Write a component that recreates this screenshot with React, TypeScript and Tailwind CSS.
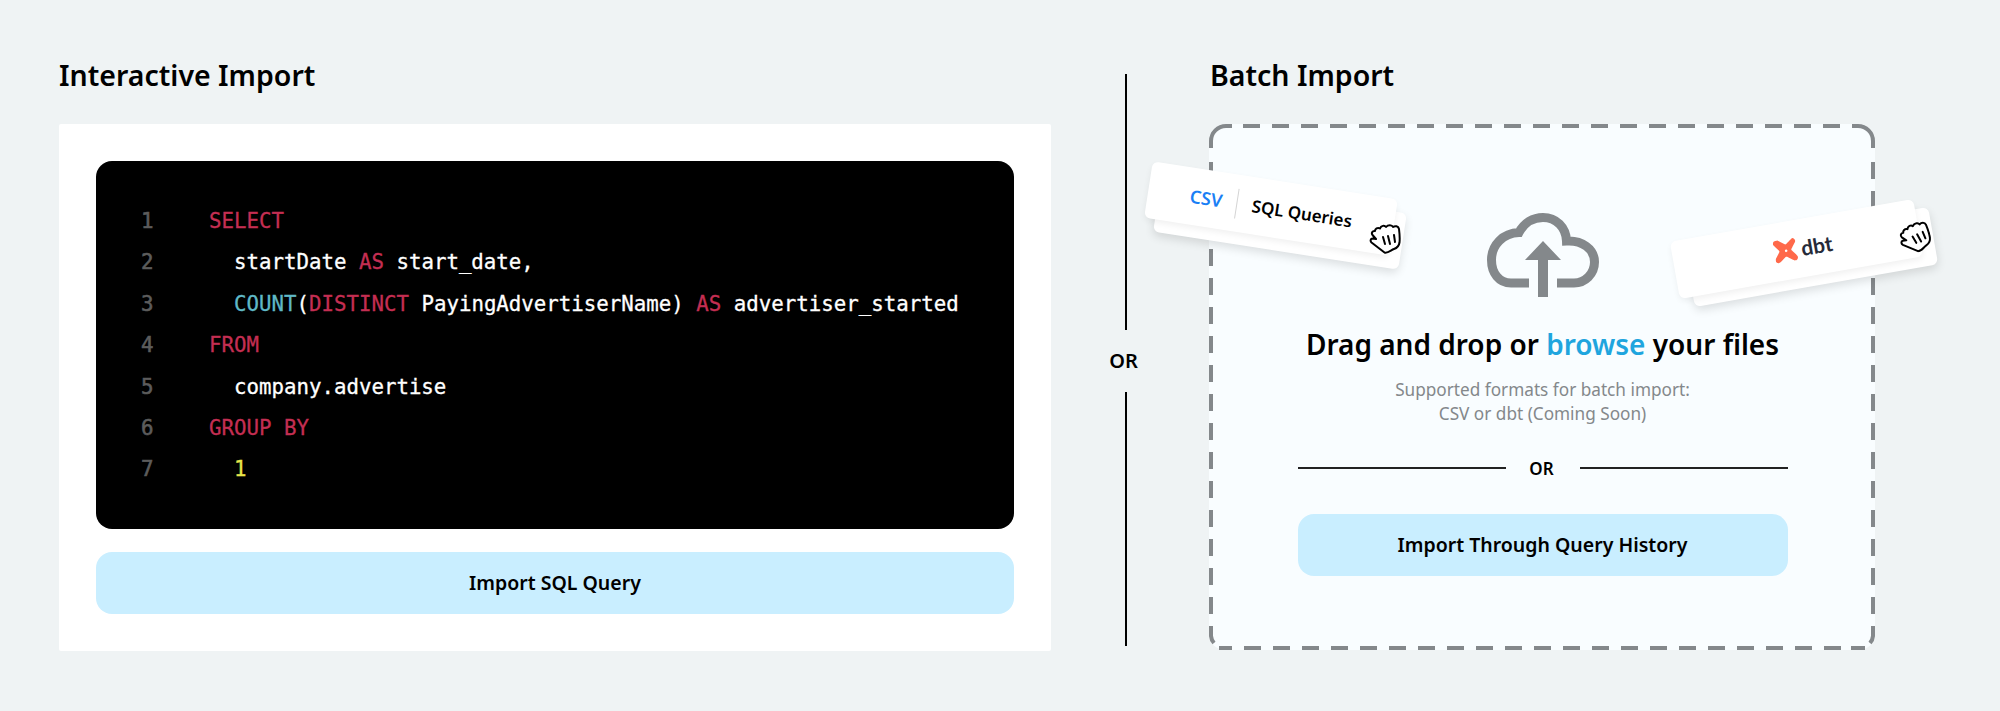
const codeFont = "font-['DejaVu_Sans_Mono',monospace] text-[20.75px] leading-[41.4px] font-normal [-webkit-text-stroke:0.3px]"

function Kw({ children }: { children: string }) {
  return <span className="text-[#c42e52]">{children}</span>
}

const lines = [
  <Kw>SELECT</Kw>,
  <>
    {"  startDate "}
    <Kw>AS</Kw>
    {" start_date,"}
  </>,
  <>
    {"  "}
    <span className="text-[#5fb8c6]">COUNT</span>
    {"("}
    <Kw>DISTINCT</Kw>
    {" PayingAdvertiserName) "}
    <Kw>AS</Kw>
    {" advertiser_started"}
  </>,
  <Kw>FROM</Kw>,
  <>{"  company.advertise"}</>,
  <Kw>GROUP BY</Kw>,
  <>
    {"  "}
    <span className="text-[#e8e64a]">1</span>
  </>,
]

function HandIcon({ className }: { className: string }) {
  return (
    <svg viewBox="0 0 32 30" className={className}>
      <path
        d="M15.500 28.500L2.500 18.500C1 17 1.500 14.500 3.500 14.500L7 15L3.500 11C2 9 3.500 6.500 6 7C6 5 8.500 3 11 4.500C12 1.500 15.500 1 17 3C19 .5 23 .5 24 3C26 1.500 29.500 2 30 5C30.500 9 31 14 30.500 18.500C30 22 28 24 25 25C22 26 19 29.500 15.500 28.500Z"
        fill="#fff"
        stroke="#000"
        strokeWidth="2"
        strokeLinejoin="round"
      />
      <path d="M14 13l2 7M19 12l2 8M25 11l1 7" stroke="#000" strokeWidth="2" strokeLinecap="round" fill="none" />
    </svg>
  )
}

function DbtMark() {
  return (
    <svg viewBox="0 0 24 24" className="w-[24px] h-[24px]">
      <path
        d="M21.500 1.200c.6.500 1 1.300 1.100 2.100 0 .7-.2 1.200-.6 1.800-.4.600-3.500 4.700-4.500 6-.3.400-.3 1 0 1.400 1.100 1.400 4.100 5.400 4.500 5.900.4.600.6 1.300.5 2-.1.800-.5 1.500-1.100 2-.6.500-1.300.6-2 .6-.6 0-1.200-.2-1.700-.6-.6-.4-4.700-3.500-5.900-4.400-.4-.3-1-.3-1.400 0-1.300 1-5.300 4-5.900 4.400-.6.400-1.300.6-2 .5-.8-.1-1.500-.5-2-1.100-.5-.6-.6-1.300-.6-2 0-.6.300-1.200.7-1.700.4-.6 3.400-4.600 4.400-5.900.3-.4.300-1 0-1.400-1-1.300-4-5.300-4.400-5.900-.4-.6-.6-1.300-.5-2 .1-.8.500-1.500 1.100-2C2.800.400 3.500.200 4.200.300c.6 0 1.200.2 1.700.6.600.4 4.600 3.400 5.900 4.400.4.300 1 .3 1.400 0 1.300-1 5.300-4 5.900-4.400.9-.6 1.900-.6 2.400.3z"
        fill="#ff694a"
      />
      <circle cx="12" cy="12" r="1.300" fill="#fff" />
    </svg>
  )
}

export default function App() {
  return (
    <div className="w-[2000px] h-[711px] bg-[#eff3f4] flex pl-[59px] pt-[55px] font-['Noto_Sans',sans-serif] text-black overflow-hidden">
      {/* Interactive */}
      <div className="w-[992px] shrink-0">
        <h2 className="text-[28.500px] leading-[40px] font-semibold">Interactive Import</h2>
        <div className="mt-[29px] h-[527px] bg-white rounded-[2px] px-[37px] pt-[37px] pb-[37px]">
          <div className="h-[368px] bg-black rounded-[16px] pl-[45px] pt-[40px] flex">
            <div className={`${codeFont} w-[68px] shrink-0 text-[#5c5c5c] [-webkit-text-stroke:0.6px]`}>
              {lines.map((_, i) => (
                <div key={i}>{i + 1}</div>
              ))}
            </div>
            <div className={`${codeFont} text-white whitespace-pre`}>
              {lines.map((line, i) => (
                <div key={i}>{line}</div>
              ))}
            </div>
          </div>
          <button className="mt-[23px] w-full h-[62px] rounded-[16px] bg-[#c9eeff] text-[19.500px] font-semibold">
            Import SQL Query
          </button>
        </div>
      </div>

      {/* Divider */}
      <div className="w-[2px] ml-[74px] h-[572px] mt-[19px] flex flex-col items-center shrink-0">
        <div className="w-[2px] h-[256px] bg-black shrink-0" />
        <div className="h-[62px] flex items-center justify-center text-[20px] font-semibold shrink-0 pr-[5px]">OR</div>
        <div className="w-[2px] flex-1 bg-black" />
      </div>

      {/* Batch */}
      <div className="ml-[82px] w-[666px] shrink-0">
        <h2 className="pl-[1px] text-[28.500px] leading-[40px] font-semibold">Batch Import</h2>
        <div className="relative mt-[29px] h-[526px] bg-[#f9fdff] rounded-[16px] flex flex-col items-center pt-[89px] pl-[1px]">
          <svg className="absolute inset-0 w-full h-full" fill="none" stroke="#84888b" strokeWidth="4">
            <g strokeDasharray="17 12">
              <path d="M34 2H632" />
              <path d="M35 524H632" />
              <path d="M2 38V491" />
              <path d="M664 38V491" />
            </g>
            <path d="M2 24V17A15 15 0 0 1 17 2H23" />
            <path d="M643 2H649A15 15 0 0 1 664 17V24" />
            <path d="M2 502V512A12 12 0 0 0 5 519" />
            <path d="M10 524H23" />
            <path d="M664 502V512A12 12 0 0 1 661 519" />
            <path d="M642 524H656" />
          </svg>

          <svg viewBox="0 0 112 84" className="w-[112px] h-[84px]" fill="none">
            <path
              d="M42 70H24C12 70 4.500 60 4.500 47C4.500 32 16 20 32 19.500C37 10 46 4.500 56 4.500C69 4.500 79 14 79.500 28C95 27 107.500 36 107.500 49C107.500 61 98 70 87 70H70"
              stroke="#84888b"
              strokeWidth="9"
            />
            <path d="M56 28L38 47h13v37h10V47h13z" fill="#84888b" />
          </svg>

          <div className="mt-[27px] text-[28px] leading-[40px] font-semibold">
            Drag and drop or <span className="text-[#1fa5de]">browse</span> your files
          </div>
          <div className="mt-[14px] text-[17.200px] leading-[24px] text-[#84888b] text-center">
            Supported formats for batch import:
            <br />
            CSV or dbt (Coming Soon)
          </div>
          <div className="mt-[29px] w-[490px] flex items-start">
            <div className="h-[2px] w-[208px] mt-[12px] bg-[#222]" />
            <div className="flex-1 text-center text-[17px] leading-[28px] font-semibold pr-[2px]">OR</div>
            <div className="h-[2px] w-[208px] mt-[12px] bg-[#222]" />
          </div>
          <button className="mt-[31px] w-[490px] h-[62px] rounded-[16px] bg-[#c9eeff] text-[19.500px] font-semibold">
            Import Through Query History
          </button>

          {/* Floating left card */}
          <div className="absolute left-[-53px] top-[70px] w-[248px] h-[57px] rounded-[6px] bg-white rotate-[8.8deg] shadow-[0_4px_10px_rgba(0,0,0,0.12)]" />
          <div className="absolute left-[-62px] top-[56px] w-[248px] h-[57px] rounded-[6px] bg-white rotate-[8.8deg] shadow-[0_3px_6px_rgba(0,0,0,0.06)] flex items-center">
            <span className="ml-[42px] text-[18px] font-semibold text-[#1a7ff5]">CSV</span>
            <span className="ml-[14px] w-[1px] h-[30px] bg-[#d4d4d4]" />
            <span className="ml-[15px] text-[17px] font-semibold whitespace-nowrap">SQL Queries</span>
          </div>
          <HandIcon className="absolute left-[160px] top-[100px] w-[32px] h-[30px]" />

          {/* Floating right card */}
          <div className="absolute left-[479px] top-[104px] w-[247px] h-[58px] rounded-[6px] bg-white -rotate-[10deg] shadow-[0_4px_10px_rgba(0,0,0,0.12)]" />
          <div className="absolute left-[464px] top-[96px] w-[247px] h-[58px] rounded-[6px] bg-white -rotate-[10deg] shadow-[0_3px_6px_rgba(0,0,0,0.06)] flex items-center justify-center gap-[3px] pl-[14px]">
            <DbtMark />
            <span className="text-[21px] font-bold font-['Lato',sans-serif] text-[#262a38] leading-[24px]">dbt</span>
          </div>
          <HandIcon className="absolute left-[690px] top-[99px] w-[32px] h-[30px] -rotate-[15deg]" />
        </div>
      </div>
    </div>
  )
}
